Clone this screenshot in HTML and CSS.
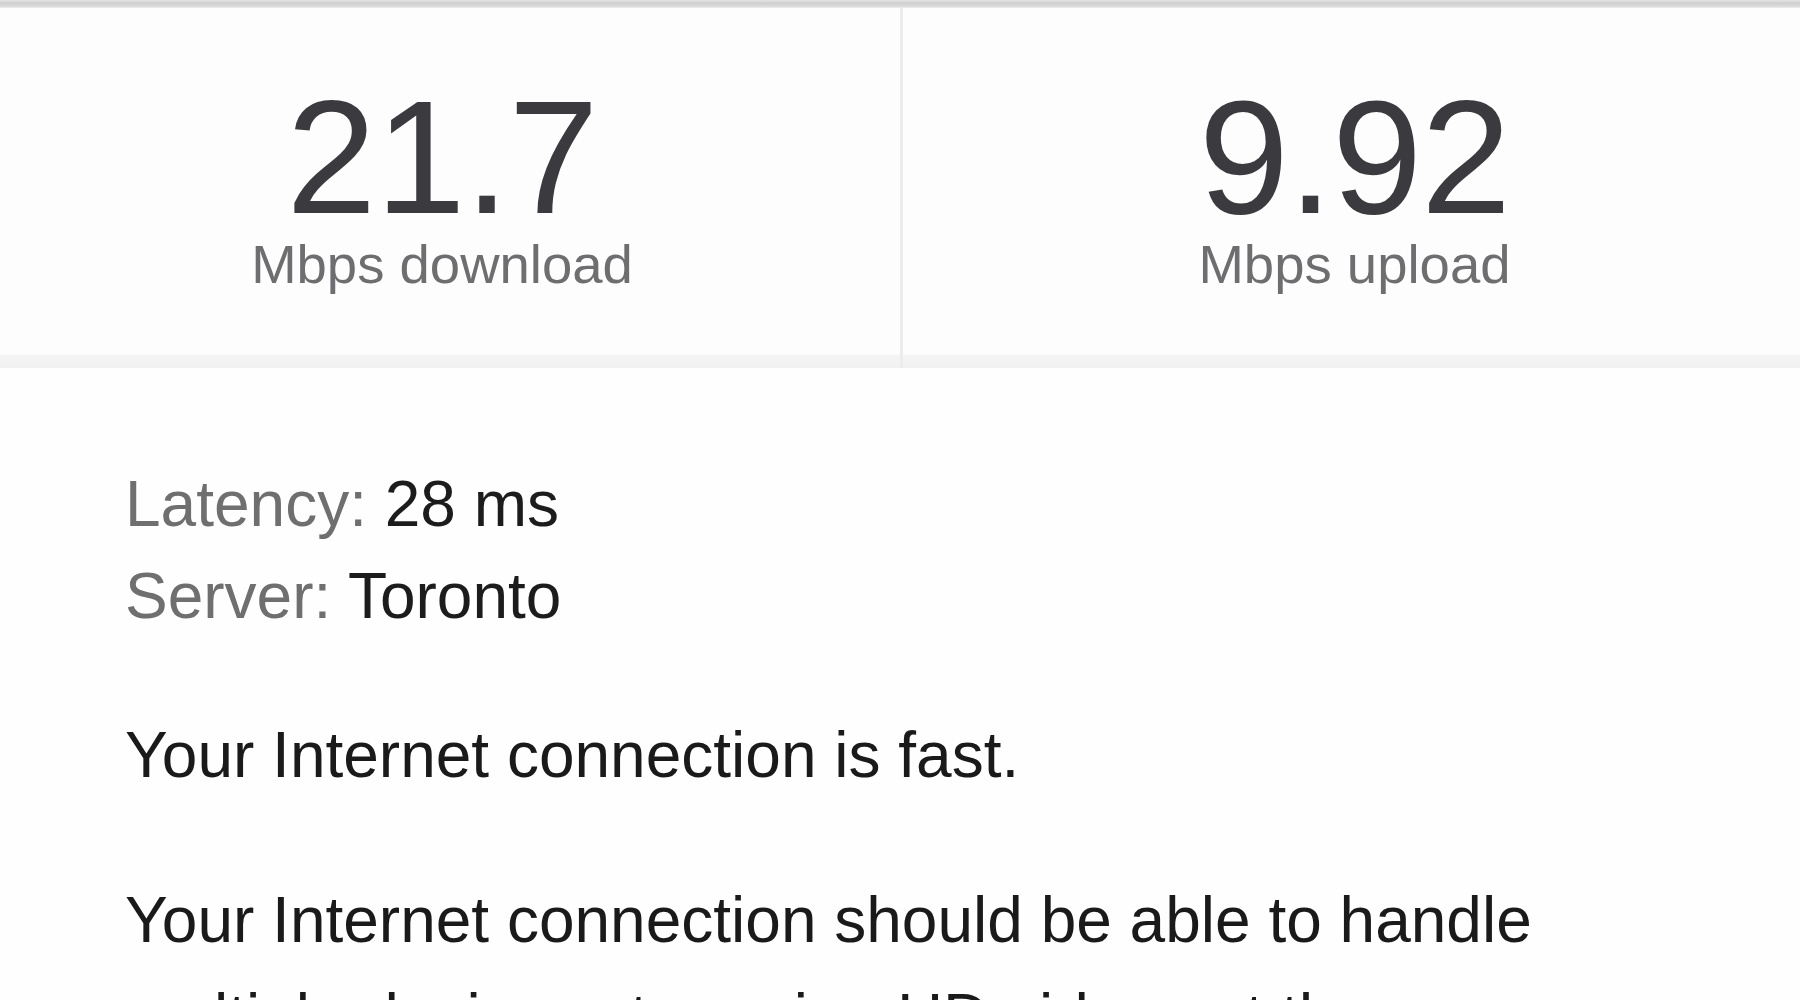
FILE: index.html
```html
<!DOCTYPE html>
<html lang="en">
<head>
<meta charset="utf-8">
<title>Speed test result</title>
<link rel="stylesheet" href="styles.css">
</head>
<body>
<div class="topbar"></div>
<section class="stats">
  <div class="stat stat-left">
    <div class="stat-value">21.7</div>
    <div class="stat-label">Mbps download</div>
  </div>
  <div class="stat stat-right">
    <div class="stat-value">9.92</div>
    <div class="stat-label">Mbps upload</div>
  </div>
</section>
<section class="details">
  <div class="info">
    <div class="info-row"><span class="info-key">Latency:</span> <span class="info-val">28 ms</span></div>
    <div class="info-row"><span class="info-key">Server:</span> <span class="info-val">Toronto</span></div>
  </div>
  <p class="summary">Your Internet connection is fast.</p>
  <p class="summary">Your Internet connection should be able to handle multiple devices streaming HD videos at the same time.</p>
</section>
</body>
</html>
```

FILE: styles.css
```css
html, body {
  margin: 0;
  padding: 0;
}
body {
  width: 1800px;
  height: 1000px;
  overflow: hidden;
  background: #fefefe;
  font-family: "Liberation Sans", Arial, sans-serif;
}
.topbar {
  height: 8px;
  background: linear-gradient(to bottom, #e4e4e4 0, #d0d0d0 3px, #d8d8d8 6px, #eeeeee 8px);
}
.stats {
  display: grid;
  grid-template-columns: 900px 1fr;
  height: 360px;
}
.stat {
  display: flex;
  flex-direction: column;
  align-items: center;
  padding-top: 68px;
  box-sizing: border-box;
  background: linear-gradient(to bottom, #fdfdfd 0, #fdfdfd 346px, #f4f4f4 347px, #f1f1f1 360px);
}
.stat-left {
  padding-right: 16px;
}
.stat-right {
  border-left: 3px solid #ececec;
  padding-left: 6px;
}
.stat-value {
  font-size: 162px;
  line-height: 162px;
  color: #3b3b3f;
  letter-spacing: -1px;
}
.stat-label {
  font-size: 54.5px;
  line-height: 54px;
  color: #6e6e70;
}
.details {
  padding: 90px 180px 0 125px;
}
.info-row {
  font-size: 64px;
  line-height: 92px;
}
.info-key {
  color: #6f6f6f;
}
.info-val {
  color: #1c1c1c;
}
.summary {
  margin: 65px 0 0;
  font-size: 64px;
  line-height: 97px;
  color: #1a1a1a;
}
.summary + .summary {
  margin-top: 68px;
}
```
